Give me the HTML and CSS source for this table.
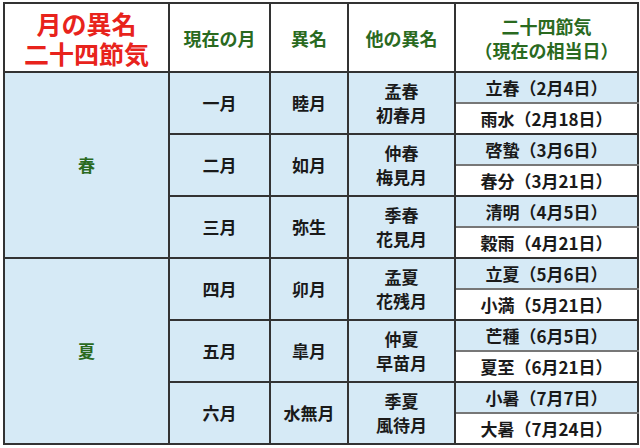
FILE: index.html
```html
<!DOCTYPE html>
<html lang="ja">
<head>
<meta charset="utf-8">
<link rel="stylesheet" href="styles.css">
</head>
<body>
<div class="wrap">
<table class="tbl">
  <colgroup>
    <col class="c1"><col class="c2"><col class="c3"><col class="c4"><col class="c5">
  </colgroup>
  <thead>
    <tr class="head">
      <th class="title"><span class="tl">月の異名</span><span class="tl">二十四節気</span></th>
      <th>現在の月</th>
      <th>異名</th>
      <th>他の異名</th>
      <th>二十四節気<br>（現在の相当日）</th>
    </tr>
  </thead>
  <tbody>
    <tr><td class="season" rowspan="6">春</td><td rowspan="2">一月</td><td rowspan="2">睦月</td><td rowspan="2" class="multi">孟春<br>初春月</td><td class="sub a">立春（2月4日）</td></tr>
    <tr><td class="sub b">雨水（2月18日）</td></tr>
    <tr><td rowspan="2">二月</td><td rowspan="2">如月</td><td rowspan="2" class="multi">仲春<br>梅見月</td><td class="sub a">啓蟄（3月6日）</td></tr>
    <tr><td class="sub b">春分（3月21日）</td></tr>
    <tr><td rowspan="2">三月</td><td rowspan="2">弥生</td><td rowspan="2" class="multi">季春<br>花見月</td><td class="sub a">清明（4月5日）</td></tr>
    <tr><td class="sub b">穀雨（4月21日）</td></tr>
    <tr class="split"><td class="season" rowspan="6">夏</td><td rowspan="2">四月</td><td rowspan="2">卯月</td><td rowspan="2" class="multi">孟夏<br>花残月</td><td class="sub a">立夏（5月6日）</td></tr>
    <tr><td class="sub b">小満（5月21日）</td></tr>
    <tr><td rowspan="2">五月</td><td rowspan="2">皐月</td><td rowspan="2" class="multi">仲夏<br>早苗月</td><td class="sub a">芒種（6月5日）</td></tr>
    <tr><td class="sub b">夏至（6月21日）</td></tr>
    <tr><td rowspan="2">六月</td><td rowspan="2">水無月</td><td rowspan="2" class="multi">季夏<br>風待月</td><td class="sub a">小暑（7月7日）</td></tr>
    <tr><td class="sub b">大暑（7月24日）</td></tr>
  </tbody>
</table>
</div>
</body>
</html>
```
FILE: styles.css
```css
html, body {
  margin: 0;
  padding: 0;
  background: #ffffff;
}
.wrap {
  padding: 2px 3px 0 3px;
}
.tbl {
  border-collapse: collapse;
  table-layout: fixed;
  width: 634px;
  font-family: "Noto Sans CJK JP", "Noto Sans", sans-serif;
  font-weight: 700;
  font-size: 17px;
  color: #1a1a1a;
  border: 2px solid #555;
}
.c1 { width: 165px; }
.c2 { width: 101px; }
.c3 { width: 78px; }
.c4 { width: 107px; }
.c5 { width: 183px; }
.tbl th, .tbl td {
  border: 2px solid #333;
  padding: 0;
  text-align: center;
  vertical-align: middle;
}
.head th {
  height: 67px;
  background: #ffffff;
  color: #2a6a1f;
  font-size: 18px;
  line-height: 24px;
  font-weight: 700;
}
.head th.title {
  color: #e8231c;
  font-size: 25px;
  line-height: 30px;
}
.tl {
  display: block;
  height: 30px;
  line-height: 30px;
}
.tbl td {
  background: #d6eaf6;
  height: 29px;
  line-height: 24px;
}
.tbl td.season {
  color: #2a6a1f;
}
.tbl td.sub.a {
  border-bottom: 2px solid #777;
}
.tbl td.sub.b {
  background: #ffffff;
  border-top: 2px solid #777;
}
.split td {
  border-top: 2px solid #444;
}
```
